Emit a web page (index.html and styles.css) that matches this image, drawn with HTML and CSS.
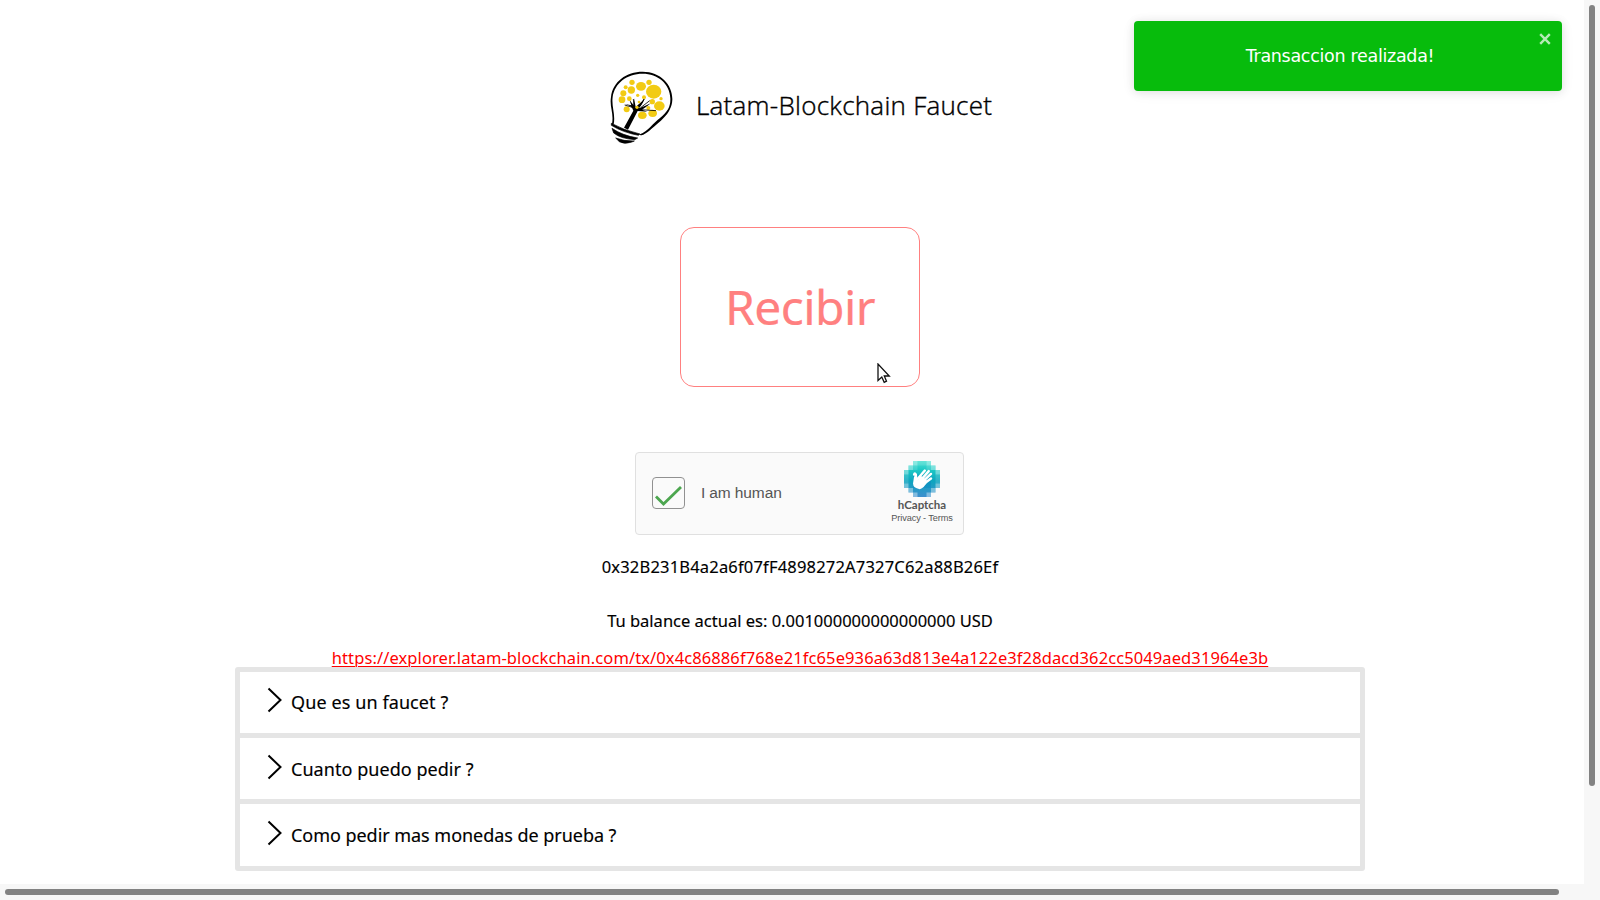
FILE: index.html
```html
<!DOCTYPE html>
<html lang="es">
<head>
<meta charset="utf-8">
<title>Latam-Blockchain Faucet</title>
<link rel="stylesheet" href="styles.css">
</head>
<body>
<div class="viewport">
  <main class="page">
    <div class="content">
      <header class="brand">
        <svg class="brand-logo" width="64" height="74" viewBox="0 0 192 222">
          <path d="M6 159C12 125-2 108 3 78C8 32 49 2 98 2C152 2 188 41 187 86C185 130 146 153 123 175C91 203 88 190 90 190C113 182 130 155 150 141C174 122 182 106 181 82C180 38 143 8 98 8C50 8 14 37 8 78C4 106 17 130 11 160Z" fill="#000"/>
          <path d="M4 157Q42 178 90 189L85 193Q38 184 4 163ZM6 172Q38 194 83 201L74 206Q32 203 11 186ZM17 201Q43 211 73 210L63 214Q43 221 28 212Z" fill="#000" stroke="#000" stroke-width="2"/>
          <path d="M42 170L70 119Q68 110 60 105L45 99L64 103L58 86L71 103L72 82L77 108L97 90L107 78L98 96L87 112L106 104L122 97L112 105L96 116L112 122L83 120L54 176Z" fill="#000"/>
          <g fill="#f2cb14">
            <ellipse cx="66" cy="34" rx="8" ry="8"/><ellipse cx="93" cy="46" rx="15" ry="13"/><ellipse cx="117" cy="34" rx="8" ry="8"/><ellipse cx="131" cy="62" rx="23" ry="21"/>
            <circle cx="47" cy="49" r="6"/><circle cx="64" cy="57" r="11"/><circle cx="40" cy="67" r="9"/><circle cx="36" cy="86" r="10"/><circle cx="58" cy="83" r="7"/><circle cx="83" cy="73" r="5"/><circle cx="102" cy="79" r="6"/><circle cx="87" cy="93" r="4"/><circle cx="153" cy="83" r="5"/><circle cx="127" cy="92" r="8"/><ellipse cx="148" cy="105" rx="16" ry="14"/><circle cx="50" cy="115" r="9"/><circle cx="81" cy="109" r="5"/><circle cx="115" cy="111" r="6"/><ellipse cx="97" cy="133" rx="13" ry="11"/><ellipse cx="128" cy="127" rx="13" ry="11"/>
          </g>
          <path d="M72 108L70 84M74 111L44 102M92 110L119 89M91 116L138 119M90 106L102 84" fill="none" stroke="#000" stroke-width="2.500"/>
        </svg>
        <h1 class="brand-title">Latam-Blockchain Faucet</h1>
      </header>

      <button class="receive"><span>Recibir</span>
        <svg class="cursor" width="14" height="21" viewBox="0 0 14 21"><path d="M1 1V17.5L4.8 14L7.2 19.3L9.5 18.2L7.3 13H12.3Z" fill="#fff" stroke="#111" stroke-width="1.3"/></svg>
      </button>

      <section class="captcha">
        <span class="check"><svg width="31" height="30" viewBox="0 0 31 30"><path d="M3 18.500L10.500 26L28 9" fill="none" stroke="#4ca64f" stroke-width="2.800"/></svg></span>
        <span class="captcha-label">I am human</span>
        <div class="captcha-brand">
          <svg width="36" height="36" viewBox="0 0 32 32">
            <defs><linearGradient id="sea" x1="0" y1="0" x2="0" y2="1"><stop offset="0" stop-color="#4ce0d2"/><stop offset=".25" stop-color="#1cc8c5"/><stop offset=".55" stop-color="#0da5be"/><stop offset="1" stop-color="#3f8fce"/></linearGradient></defs>
            <path d="M8 0H24V4H28V8H32V24H28V28H24V32H8V28H4V24H0V8H4V4H8Z" fill="url(#sea)"/>
            <path d="M8 0H12V4H8ZM20 0H24V4H20ZM4 4H8V8H4ZM24 4H28V8H24ZM0 8H4V12H0ZM28 8H32V12H28ZM0 20H4V24H0ZM28 20H32V24H28ZM4 24H8V28H4ZM24 24H28V28H24ZM8 28H12V32H8ZM20 28H24V32H20Z" fill="#fff" opacity=".38"/>
            <path d="M0 12H4V20H0ZM28 12H32V20H28ZM12 0H20V4H12ZM8 4H12V8H8ZM20 4H24V8H20Z" fill="#fff" opacity=".14"/>
            <path d="M8 12H24V24H8Z" fill="#007bc0" opacity=".3"/>
            <g fill="none" stroke="#fff" stroke-width="2.200" stroke-linecap="round"><path d="M11 18L10.500 12Q9.500 10 9 12"/><path d="M12 16L18.500 8.500M15 17L22 9M17 18L24 11.500M18 20L24 15.500"/></g>
            <path d="M9 13L12 17L15 13L21 18Q18 24 14 25Q8 24 8 20Z" fill="#fff"/>
          </svg>
          <b class="captcha-name">hCaptcha</b>
          <span class="captcha-links">Privacy - Terms</span>
        </div>
      </section>

      <p class="line address"><span>0x32B231B4a2a6f07fF4898272A7327C62a88B26Ef</span></p>
      <p class="line balance"><span>Tu balance actual es: 0.001000000000000000 USD</span></p>
      <a class="line tx"><span>https://explorer.latam-blockchain.com/tx/0x4c86886f768e21fc65e936a63d813e4a122e3f28dacd362cc5049aed31964e3b</span></a>

      <section class="faq">
        <div class="question"><svg class="chevron" width="15" height="26" viewBox="0 0 15 26"><path d="M1.500 1.500L13.500 13L1.500 24.500"/></svg><span class="q1">Que es un faucet ?</span></div>
        <div class="question lower"><svg class="chevron" width="15" height="26" viewBox="0 0 15 26"><path d="M1.500 1.500L13.500 13L1.500 24.500"/></svg><span class="q2">Cuanto puedo pedir ?</span></div>
        <div class="question lower"><svg class="chevron" width="15" height="26" viewBox="0 0 15 26"><path d="M1.500 1.500L13.500 13L1.500 24.500"/></svg><span class="q3">Como pedir mas monedas de prueba ?</span></div>
      </section>
    </div>
  </main>
  <div class="track-y"><div class="thumb-y"></div></div>
  <div class="track-x"><div class="thumb-x"></div></div>
</div>
<aside class="toast"><span>Transaccion realizada!</span>
  <svg class="close" width="12" height="12" viewBox="0 0 12 12"><path d="M1.200 1.200L10.800 10.800M10.800 1.200L1.200 10.800"/></svg>
</aside>
</body>
</html>
```
FILE: styles.css
```css
* { box-sizing: border-box; }
body { margin: 0; background: #fff; color: #000; font-family: "Noto Sans", "Open Sans", sans-serif; }
svg { display: block; flex: none; }
.viewport { display: grid; grid-template: 884px 16px / 1584px 16px; width: 1600px; height: 900px; overflow: hidden; background: #f7f7f7; }
.page { overflow: hidden; background: #fff; }
.content { display: flex; flex-direction: column; align-items: center; width: 1600px; padding-top: 71px; }

.brand { display: flex; width: 380px; height: 74px; gap: 22px; align-items: center; }
.brand-title { margin: 0; font: 300 26px/36px "Open Sans", sans-serif; white-space: nowrap; padding-bottom: 7px; letter-spacing: .26px; -webkit-text-stroke: .4px #000; }

.receive { position: relative; width: 240px; height: 160px; margin-top: 82px; padding: 0; border: 1px solid #ff8080; border-radius: 14px; background: #fff; color: #ff8080; font: 400 48px/60px "Noto Sans", sans-serif; letter-spacing: -.55px; -webkit-text-stroke: .2px #ff8080; }
.cursor { position: absolute; left: 196px; top: 135px; }

.captcha { display: flex; align-items: center; width: 329px; height: 83px; margin: 65px 1px 0 0; padding: 0 0 2px 16px; border: 1px solid #e0e0e0; border-radius: 4px; background: #fafafa; }
.check { flex: none; width: 33px; height: 32px; border: 1px solid #919191; border-radius: 4px; }
.captcha-label { flex: none; width: 174px; margin-left: 16px; color: #555; font: 15.5px/20px "Liberation Sans", sans-serif; letter-spacing: -.12px; }
.captcha-brand { flex: none; display: flex; flex-direction: column; align-items: center; width: 92px; margin-left: 1px; padding-top: 1px; }
.captcha-name { color: #555; font: 700 11.5px/14px Lato, sans-serif; margin-top: 1px; }
.captcha-links { color: #555; font: 9.2px/13px "Liberation Sans", sans-serif; letter-spacing: -.12px; white-space: nowrap; }

.line { display: block; margin: 0; font-size: 16.5px; line-height: 24px; white-space: nowrap; }
.address { margin-top: 20px; letter-spacing: .19px; }
.balance { margin-top: 30px; }
.tx { margin-top: 13px; color: #f00; letter-spacing: .1px; text-decoration: underline; text-underline-offset: 2px; text-decoration-thickness: 1px; }
.address, .balance, .question { -webkit-text-stroke: .15px #000; }

.faq { width: 1130px; height: 204px; margin-top: -3px; padding: 5px; border-radius: 3px; background: #e5e5e5; display: grid; grid-template-rows: 61px 61px 62px; gap: 5px; }
.question { display: flex; gap: 9px; padding: 15px 0 0 27px; background: #fff; font-size: 18px; line-height: 31px; }
.lower { padding-top: 16px; }
.q1 { letter-spacing: .1px; }
.q2 { letter-spacing: .05px; }
.q3 { letter-spacing: -.04px; }
.chevron { fill: none; stroke: #000; stroke-width: 2; }

.track-y { padding: 5px 5px 0; }
.thumb-y { width: 6px; height: 781px; border-radius: 3px; background: #828282; }
.track-x { padding: 5px 5px 0; }
.thumb-x { width: 1554px; height: 6px; border-radius: 3px; background: #828282; }

.toast { position: absolute; left: 1134px; top: 21px; width: 428px; height: 70px; display: flex; align-items: center; justify-content: center; padding-right: 16px; border-radius: 4px; background: #07bc0c; color: #fff; font: 17.5px/24px "DejaVu Sans", sans-serif; letter-spacing: -.3px; box-shadow: 0 1px 10px rgba(0,0,0,.1), 0 2px 15px rgba(0,0,0,.05); }
.close { position: absolute; right: 11px; top: 12px; fill: none; stroke: #b4ebb6; stroke-width: 2.4; }
```
